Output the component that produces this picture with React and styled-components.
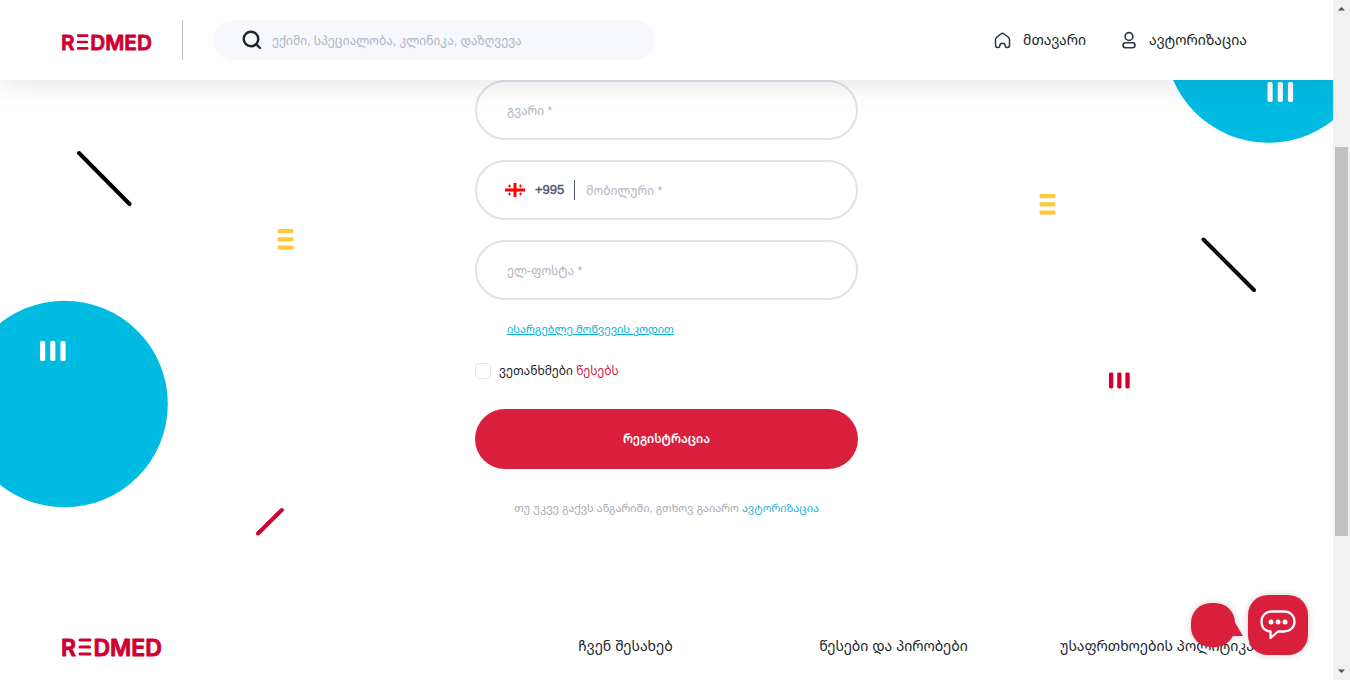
import React from "react";
import styled, { createGlobalStyle } from "styled-components";

const Global = createGlobalStyle`
  *, *::before, *::after { box-sizing: border-box; }
  body {
    margin: 0;
    background: #fff;
    color: #212529;
    font-family: "Liberation Sans", "Noto Sans Georgian", "DejaVu Sans", sans-serif;
    font-size: 12px;
    line-height: 20px;
  }
  a { color: inherit; text-decoration: none; }
`;

const Window = styled.div`
  display: flex;
  height: 100vh;
  overflow: hidden;
`;

const Page = styled.div`
  position: relative;
  flex: 1;
  min-width: 0;
  display: flex;
  flex-direction: column;
  overflow: hidden;
`;

const Header = styled.header`
  position: relative;
  z-index: 2;
  flex: none;
  display: flex;
  align-items: center;
  height: 80px;
  padding: 0 86px 0 62px;
  background: #fff;
  box-shadow: 0 0 34px rgba(33, 37, 60, 0.14);
`;

const Brand = styled.a`
  display: flex;
  align-items: center;
  padding-top: 2px;
  svg { display: block; overflow: visible; }
`;

const HeaderBrand = styled(Brand)`
  height: 40px;
  padding: 4px 30px 0 0;
  border-right: 1px solid #b9c0c9;
`;

const Search = styled.label`
  display: flex;
  align-items: center;
  gap: 10px;
  width: 442px;
  height: 40px;
  margin-left: 30px;
  padding: 0 30px 0 29px;
  border-radius: 20px;
  background: #f7f8fd;
  svg { flex: none; }
`;

const TextInput = styled.input`
  flex: 1;
  min-width: 0;
  padding: 2px 0 0;
  border: 0;
  outline: 0;
  background: transparent;
  color: #212529;
  font: inherit;
  &::placeholder { color: ${(p) => p.$hint || "#b3b3bd"}; opacity: 1; }
`;

const Nav = styled.nav`
  display: flex;
  gap: 35px;
  margin-left: auto;
`;

const NavLink = styled.a`
  display: flex;
  align-items: center;
  gap: 12px;
  font-size: 14px;
`;

const Main = styled.main`
  position: relative;
  flex: 1 0 auto;
  display: flex;
  flex-direction: column;
  align-items: center;
`;

const Art = styled.svg`
  position: absolute;
  top: 0;
  ${(p) => p.$side}: 0;
  pointer-events: none;
`;

const Form = styled.form`
  position: relative;
  display: flex;
  flex-direction: column;
  width: 383px;
  max-width: 100%;
`;

const Field = styled.label`
  display: flex;
  align-items: center;
  height: 60px;
  margin-bottom: 20px;
  padding: 0 30px 0 ${(p) => (p.$prefixed ? 28 : 30)}px;
  border: 2px solid #dfe2ea;
  border-radius: 30px;
`;

const Prefix = styled.span`
  display: flex;
  align-items: center;
  gap: 10px;
  height: 20px;
  margin-right: 11px;
  padding-right: 10px;
  border-right: 1px solid #4a5672;
  color: #4d5670;
  font-size: 13px;
  -webkit-text-stroke: 0.4px #4d5670;
`;

const InviteLink = styled.a`
  align-self: flex-start;
  margin-left: 32px;
  color: #00b1d8;
  font-size: 11px;
  line-height: 18px;
  text-decoration: underline;
`;

const Consent = styled.div`
  display: flex;
  align-items: center;
  gap: 8px;
  margin: 23px 0 28px;
  a { color: #d9203d; }
`;

const Checkbox = styled.input`
  appearance: none;
  width: 16px;
  height: 16px;
  margin: 0;
  border: 1px solid #e6e6e9;
  border-radius: 4px;
  background: #fff;
`;

const Submit = styled.button`
  height: 60px;
  border: 0;
  border-radius: 30px;
  background: #da1f3d;
  color: #fff;
  font: inherit;
  font-weight: 600;
`;

const SignIn = styled.p`
  margin: 29px 0 0;
  color: #a9a9ad;
  font-size: 11px;
  text-align: center;
  a { color: #1fb0dc; }
`;

const Footer = styled.footer`
  flex: none;
  display: grid;
  grid-template-columns: 15fr 7fr 7fr 7fr;
  align-items: center;
  height: 68px;
  padding: 0 32px 0 62px;
  font-size: 14px;
  white-space: nowrap;
`;

const Chat = styled.div`
  position: absolute;
  right: 25px;
  bottom: 25px;
  z-index: 3;
  display: flex;
  align-items: center;
  gap: 5px;
`;

const ChatTip = styled.svg`
  display: block;
  overflow: visible;
  filter: drop-shadow(0 0 3px rgba(0, 0, 0, 0.2));
`;

const ChatButton = styled.button`
  display: grid;
  place-items: center;
  width: 60px;
  height: 60px;
  padding: 0;
  border: 0;
  border-radius: 20px;
  background: #da1f3d;
  box-shadow: 0 0 6px rgba(0, 0, 0, 0.2);
`;

const ScrollTrack = styled.div`
  flex: none;
  display: flex;
  flex-direction: column;
  align-items: center;
  width: 17px;
  background: #f1f1f1;
`;

const ScrollThumb = styled.div`
  width: 13px;
  flex: 389;
  background: #c1c1c1;
`;

const ScrollGap = styled.div`
  flex: ${(p) => p.$size};
`;

const ScrollArrow = styled.svg`
  flex: none;
  display: block;
`;

function Logo({ width }) {
  return (
    <svg width={width} height={width / 5} viewBox="0 0 100 20" role="img" aria-label="REDMED">
      <g
        fill="#cf0030"
        stroke="#cf0030"
        strokeWidth="0.900"
        strokeLinejoin="round"
        fontFamily="Inter, sans-serif"
        fontWeight="600"
        fontSize="23"
      >
        <text x="-1" y="18.500">R</text>
        <text x="31.500" y="18.500">DMED</text>
      </g>
      <path d="M18 3H28M18 10H27.500M18 17H28" stroke="#cf0030" strokeWidth="3" strokeLinecap="round" />
    </svg>
  );
}

function Bars({ x, y, w, h, step, color, vertical }) {
  return [0, 1, 2].map((i) => (
    <rect
      key={i}
      x={vertical ? x + i * step : x}
      y={vertical ? y : y + i * step}
      width={w}
      height={h}
      rx={Math.min(w, h) / 3}
      fill={color}
    />
  ));
}

export default function App() {
  return (
    <Window>
      <Global />
      <Page>
        <Header>
          <HeaderBrand href="#">
            <Logo width={90} />
          </HeaderBrand>
          <Search>
            <svg width="20" height="20" viewBox="0 0 20 20" fill="none" stroke="#212529" strokeWidth="2.400" strokeLinecap="round">
              <circle cx="9" cy="9" r="7.300" />
              <path d="M14.300 14.300L18 18" />
            </svg>
            <TextInput aria-label="ძებნა" $hint="#adb3be" placeholder="ექიმი, სპეციალობა, კლინიკა, დაზღვევა" />
          </Search>
          <Nav>
            <NavLink href="#">
              <svg width="17" height="18" viewBox="0 0 17 18" fill="none" stroke="#2d3648" strokeWidth="1.500" strokeLinejoin="round">
                <path d="M1.500 8.700C1.500 7.600 1.900 6.800 2.800 6.100L6.900 3C7.900 2.200 9.100 2.200 10.100 3L14.200 6.100C15.100 6.800 15.500 7.600 15.500 8.700V14.200C15.500 15.700 14.700 16.400 13.500 16.400H12.700C11.600 16.400 11.200 15.800 11.200 14.900C11.200 13.200 10.200 12.200 8.500 12.200S5.800 13.200 5.800 14.900C5.800 15.800 5.400 16.400 4.300 16.400H3.500C2.300 16.400 1.500 15.700 1.500 14.200Z" />
              </svg>
              მთავარი
            </NavLink>
            <NavLink href="#">
              <svg width="16" height="18" viewBox="0 0 16 18" fill="none" stroke="#2d3648" strokeWidth="1.600">
                <circle cx="8" cy="5.500" r="3.900" />
                <rect x="2" y="11.800" width="12" height="5" rx="2.500" />
              </svg>
              ავტორიზაცია
            </NavLink>
          </Nav>
        </Header>

        <Main>
          <Art $side="left" width="320" height="470" aria-hidden="true">
            <path d="M79 73L129.500 124" stroke="#000" strokeWidth="4" strokeLinecap="round" />
            <Bars x={277.500} y={149} w={16} h={4.300} step={8.200} color="#ffc93f" />
            <circle cx="64.500" cy="324" r="103.300" fill="#00bbe1" />
            <Bars x={40} y={261} w={5.200} h={20} step={10.200} color="#fff" vertical />
            <path d="M258 453.500L281.800 430" stroke="#cf0030" strokeWidth="4" strokeLinecap="round" />
          </Art>
          <Art $side="right" width="320" height="470" aria-hidden="true">
            <circle cx="255.500" cy="-41" r="103.800" fill="#00bbe1" />
            <Bars x={254.500} y={2} w={5.200} h={20} step={10.200} color="#fff" vertical />
            <Bars x={26.500} y={114} w={16} h={4.300} step={8.200} color="#ffc93f" />
            <path d="M190.500 159.500L241 210" stroke="#0a0a0a" strokeWidth="4" strokeLinecap="round" />
            <Bars x={96} y={292.500} w={4.300} h={16} step={8.200} color="#cf0030" vertical />
          </Art>

          <Form>
            <Field>
              <TextInput aria-label="გვარი" placeholder="გვარი *" />
            </Field>
            <Field $prefixed>
              <Prefix>
                <svg width="20" height="14" viewBox="0 0 20 14" fill="#f00">
                  <path d="M8.500 0H11.500V5.500H20V8.500H11.500V14H8.500V8.500H0V5.500H8.500Z" />
                  <path d="M4 1.500H5V2.500H6V3.500H5V4.500H4V3.500H3V2.500H4ZM15 1.500H16V2.500H17V3.500H16V4.500H15V3.500H14V2.500H15ZM4 9.500H5V10.500H6V11.500H5V12.500H4V11.500H3V10.500H4ZM15 9.500H16V10.500H17V11.500H16V12.500H15V11.500H14V10.500H15Z" />
                </svg>
                +995
              </Prefix>
              <TextInput type="tel" aria-label="მობილური" placeholder="მობილური *" />
            </Field>
            <Field>
              <TextInput type="email" aria-label="ელ-ფოსტა" placeholder="ელ-ფოსტა *" />
            </Field>
            <InviteLink href="#">ისარგებლე მოწვევის კოდით</InviteLink>
            <Consent>
              <Checkbox type="checkbox" id="terms" />
              <label htmlFor="terms">
                ვეთანხმები <a href="#">წესებს</a>
              </label>
            </Consent>
            <Submit type="button">რეგისტრაცია</Submit>
            <SignIn>
              თუ უკვე გაქვს ანგარიში, გთხოვ გაიარო <a href="#">ავტორიზაცია</a>
            </SignIn>
          </Form>
        </Main>

        <Footer>
          <Brand href="#">
            <Logo width={100} />
          </Brand>
          <a href="#">ჩვენ შესახებ</a>
          <a href="#">წესები და პირობები</a>
          <a href="#">უსაფრთხოების პოლიტიკა</a>
        </Footer>

        <Chat>
          <ChatTip width="52" height="44" viewBox="0 0 52 44" fill="#da1f3d" aria-hidden="true">
            <rect width="44" height="44" rx="20" />
            <path d="M43 18L52 33H38Z" />
          </ChatTip>
          <ChatButton type="button" aria-label="ჩატი">
            <svg width="36" height="30" viewBox="0 0 36 30" fill="none" stroke="#fff" strokeWidth="2.300" strokeLinejoin="round">
              <path d="M12 1.500H24C30 1.500 34.500 5.500 34.500 11.500S30 21.500 24 21.500H18L10.500 28V21.500C5 21 1.500 17.500 1.500 11.500S6 1.500 12 1.500Z" />
              <g fill="#fff" stroke="none">
                <circle cx="11" cy="12" r="2.500" />
                <circle cx="18" cy="12" r="2.500" />
                <circle cx="25" cy="12" r="2.500" />
              </g>
            </svg>
          </ChatButton>
        </Chat>
      </Page>

      <ScrollTrack aria-hidden="true">
        <ScrollArrow width="17" height="17" viewBox="0 0 17 17">
          <path d="M5 10.500L8.500 7L12 10.500Z" fill="#505050" />
        </ScrollArrow>
        <ScrollGap $size={130} />
        <ScrollThumb />
        <ScrollGap $size={127} />
        <ScrollArrow width="17" height="17" viewBox="0 0 17 17">
          <path d="M5 6.500L8.500 10L12 6.500Z" fill="#505050" />
        </ScrollArrow>
      </ScrollTrack>
    </Window>
  );
}
